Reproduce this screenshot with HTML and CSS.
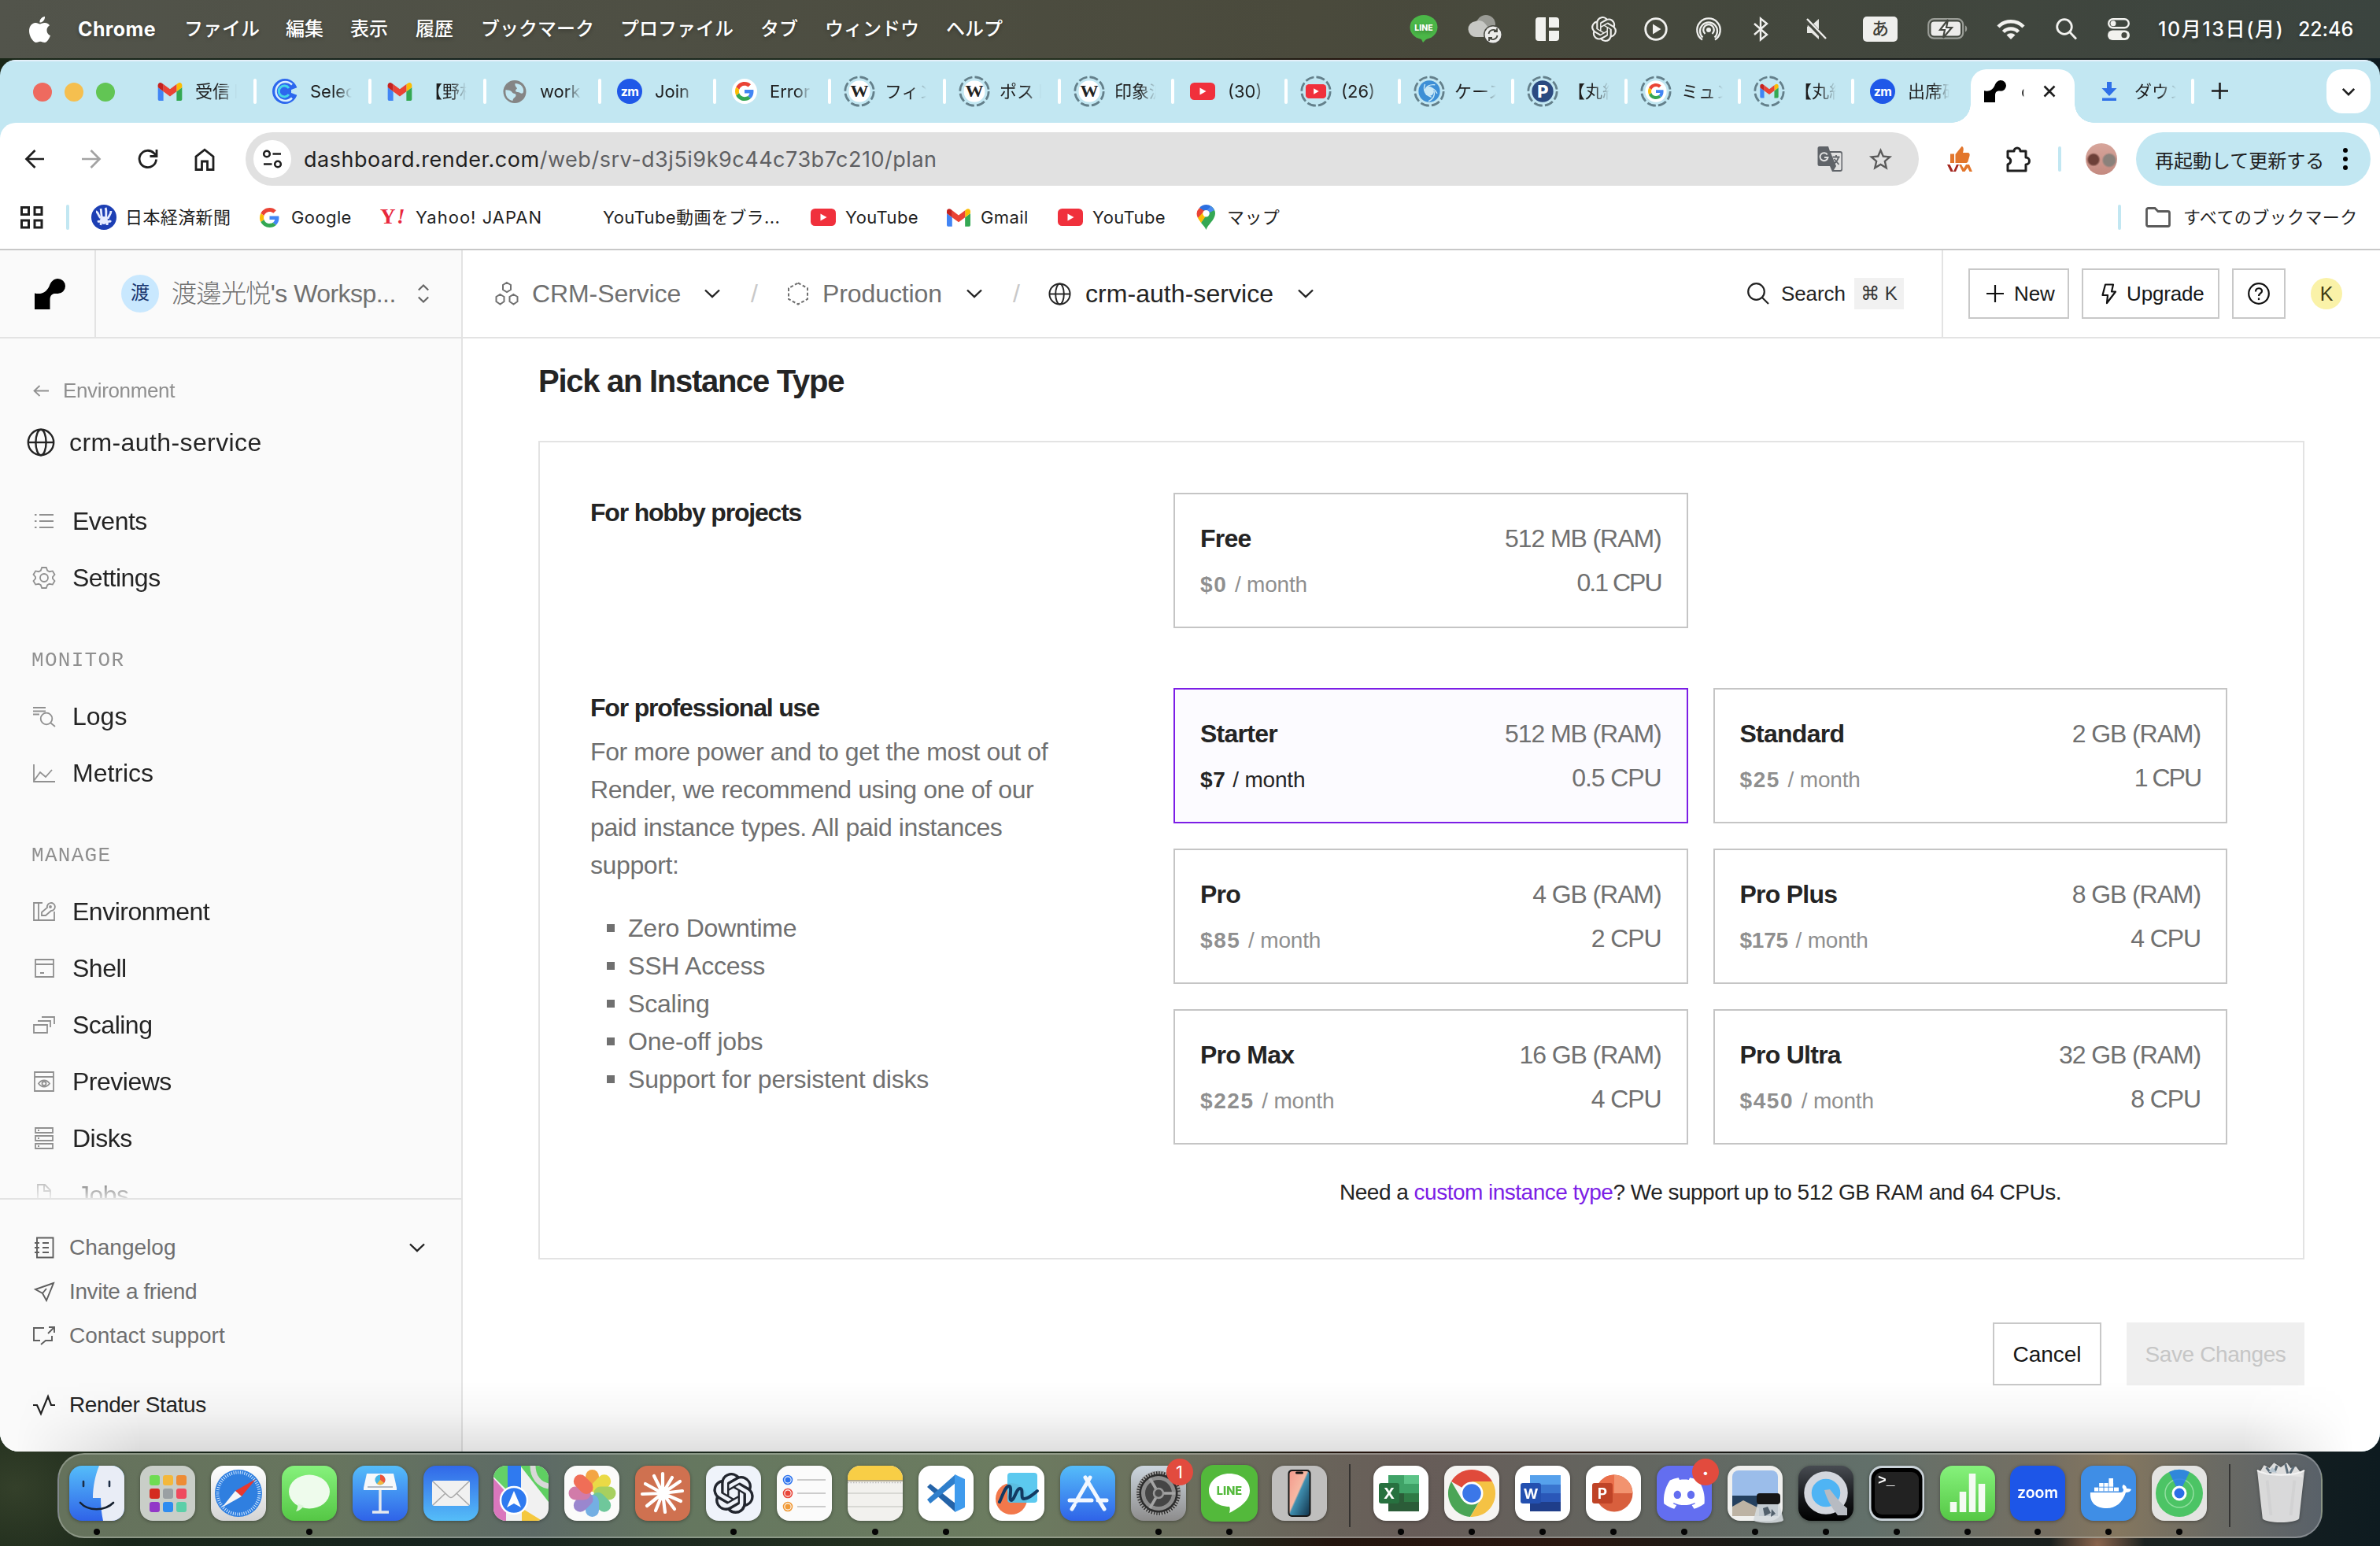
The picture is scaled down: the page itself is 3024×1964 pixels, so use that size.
FILE: index.html
```html
<!DOCTYPE html>
<html lang="ja">
<head>
<meta charset="utf-8">
<title>crm-auth-service</title>
<link rel="stylesheet" href="styles.css">
</head>
<body>
<svg class="sprite" width="0" height="0" aria-hidden="true">
  <symbol id="gmail" viewBox="52 42 88 66"><path fill="#4285f4" d="M58 108h14V74L52 59v43c0 3.32 2.69 6 6 6"/><path fill="#34a853" d="M120 108h14c3.32 0 6-2.69 6-6V59l-20 15"/><path fill="#fbbc04" d="M120 48v26l20-15v-8c0-7.42-8.47-11.65-14.4-7.2"/><path fill="#ea4335" d="M72 74V48l24 18 24-18v26L96 92"/><path fill="#c5221f" d="M52 51v8l20 15V48l-5.6-4.2c-5.94-4.45-14.4-.22-14.4 7.2"/></symbol>
  <symbol id="google" viewBox="0 0 48 48"><path fill="#EA4335" d="M24 9.5c3.54 0 6.71 1.22 9.21 3.6l6.85-6.85C35.9 2.38 30.47 0 24 0 14.62 0 6.51 5.38 2.56 13.22l7.98 6.19C12.43 13.72 17.74 9.5 24 9.5z"/><path fill="#4285F4" d="M46.98 24.55c0-1.57-.15-3.09-.38-4.55H24v9.02h12.94c-.58 2.96-2.26 5.48-4.78 7.18l7.73 6c4.51-4.18 7.09-10.36 7.09-17.65z"/><path fill="#FBBC05" d="M10.53 28.59c-.48-1.45-.76-2.99-.76-4.59s.27-3.14.76-4.59l-7.98-6.19C.92 16.46 0 20.12 0 24c0 3.88.92 7.54 2.56 10.78l7.97-6.19z"/><path fill="#34A853" d="M24 48c6.48 0 11.93-2.13 15.89-5.81l-7.73-6c-2.15 1.45-4.92 2.3-8.16 2.3-6.26 0-11.57-4.22-13.47-9.91l-7.98 6.19C6.51 42.62 14.62 48 24 48z"/></symbol>
  <symbol id="youtube" viewBox="0 0 32 22"><rect width="32" height="22" rx="5.5" fill="#f0303c"/><path d="M12.5 6.5v9l8-4.5z" fill="#fff"/></symbol>
  <symbol id="wiki" viewBox="0 0 32 32"><circle cx="16" cy="16" r="16" fill="#fff"/><text x="16" y="24" font-family="Liberation Serif, serif" font-size="24" font-weight="700" text-anchor="middle" fill="#222" textLength="27" lengthAdjust="spacingAndGlyphs">W</text></symbol>
  <symbol id="zm" viewBox="0 0 32 32"><circle cx="16" cy="16" r="16" fill="#1f58e8"/><text x="16" y="21.5" font-family="Inter, sans-serif" font-size="16" font-weight="700" text-anchor="middle" fill="#fff" letter-spacing="-.6">zm</text></symbol>
  <symbol id="openai" viewBox="0 0 24 24"><path fill="currentColor" d="M22.282 9.821a5.985 5.985 0 0 0-.516-4.91 6.046 6.046 0 0 0-6.51-2.9A6.065 6.065 0 0 0 4.981 4.18a5.985 5.985 0 0 0-3.998 2.9 6.046 6.046 0 0 0 .743 7.097 5.98 5.98 0 0 0 .51 4.911 6.051 6.051 0 0 0 6.515 2.9A5.985 5.985 0 0 0 13.26 24a6.056 6.056 0 0 0 5.772-4.206 5.99 5.99 0 0 0 3.997-2.9 6.056 6.056 0 0 0-.747-7.073zM13.26 22.43a4.476 4.476 0 0 1-2.876-1.04l.141-.081 4.779-2.758a.795.795 0 0 0 .392-.681v-6.737l2.02 1.168a.071.071 0 0 1 .038.052v5.583a4.504 4.504 0 0 1-4.494 4.494zM3.6 18.304a4.47 4.47 0 0 1-.535-3.014l.142.085 4.783 2.759a.771.771 0 0 0 .78 0l5.843-3.369v2.332a.08.08 0 0 1-.033.062L9.74 19.95a4.5 4.5 0 0 1-6.14-1.646zM2.34 7.896a4.485 4.485 0 0 1 2.366-1.973V11.6a.766.766 0 0 0 .388.676l5.815 3.355-2.02 1.168a.076.076 0 0 1-.071 0l-4.83-2.786A4.504 4.504 0 0 1 2.34 7.872zm16.597 3.855l-5.833-3.387L15.119 7.2a.076.076 0 0 1 .071 0l4.83 2.791a4.494 4.494 0 0 1-.676 8.105v-5.678a.79.79 0 0 0-.407-.667zm2.01-3.023l-.141-.085-4.774-2.782a.776.776 0 0 0-.785 0L9.409 9.23V6.897a.066.066 0 0 1 .028-.061l4.83-2.787a4.5 4.5 0 0 1 6.68 4.66zm-12.64 4.135l-2.02-1.164a.08.08 0 0 1-.038-.057V6.075a4.5 4.5 0 0 1 7.375-3.453l-.142.08L8.704 5.46a.795.795 0 0 0-.393.681zm1.097-2.365l2.602-1.5 2.607 1.5v2.999l-2.597 1.5-2.607-1.5z"/></symbol>
  <symbol id="render" viewBox="0 0 40 40"><path fill="#000" d="M0 19c9 2 15-1 19-9C21 4 25 0 30.2 0a9.8 9.8 0 0 1 0 19.6C24 19 20 20 20 28v12H0z"/></symbol>
  <symbol id="globe" viewBox="0 0 36 36"><g fill="none" stroke="currentColor" stroke-width="2.4"><circle cx="18" cy="18" r="16.2"/><ellipse cx="18" cy="18" rx="6.6" ry="16.2"/><path d="M2 18h32"/></g></symbol>
  <symbol id="chev" viewBox="0 0 20 12"><path d="M1 1.5l9 8.5 9-8.5" fill="none" stroke="currentColor" stroke-width="2.4"/></symbol>
  <symbol id="ring" viewBox="0 0 44 44"><circle cx="22" cy="22" r="20" fill="none" stroke="#64808b" stroke-width="3" stroke-dasharray="12.2 3.500"/></symbol>
  <linearGradient id="gBlue" x1="0" y1="0" x2="0" y2="1"><stop offset="0" stop-color="#55bdfa"/><stop offset="1" stop-color="#2f63e8"/></linearGradient>
  <linearGradient id="gBlueUp" x1="0" y1="0" x2="0" y2="1"><stop offset="0" stop-color="#3168e8"/><stop offset="1" stop-color="#55bdf8"/></linearGradient>
  <linearGradient id="gGreen" x1="0" y1="0" x2="0" y2="1"><stop offset="0" stop-color="#86f27c"/><stop offset="1" stop-color="#55c745"/></linearGradient>
  <linearGradient id="gGrey" x1="0" y1="0" x2="0" y2="1"><stop offset="0" stop-color="#ffffff"/><stop offset="1" stop-color="#d4d4d4"/></linearGradient>
  <linearGradient id="gSteel" x1="0" y1="0" x2="0" y2="1"><stop offset="0" stop-color="#ccd6df"/><stop offset="1" stop-color="#8d8c8c"/></linearGradient>
  <linearGradient id="gInk" x1="0" y1="0" x2="0" y2="1"><stop offset="0" stop-color="#484c52"/><stop offset=".6" stop-color="#15171a"/><stop offset="1" stop-color="#000"/></linearGradient>
  <linearGradient id="gPhone" x1="0" y1="0" x2="1" y2="1"><stop offset="0" stop-color="#f49a8c"/><stop offset=".45" stop-color="#f6b9a4"/><stop offset=".5" stop-color="#3f8fb0"/><stop offset="1" stop-color="#13354d"/></linearGradient>
</svg>

<div class="desktop">
  <header class="menubar">
    <svg width="28" height="33" viewBox="2.4 0 18.5 24"><path fill="#fff" d="M12.152 6.896c-.948 0-2.415-1.078-3.96-1.04-2.04.027-3.91 1.183-4.961 3.014-2.117 3.675-.546 9.103 1.519 12.09 1.013 1.454 2.208 3.09 3.792 3.039 1.52-.065 2.09-.987 3.935-.987 1.831 0 2.35.987 3.96.948 1.637-.026 2.676-1.48 3.676-2.948 1.156-1.688 1.636-3.325 1.662-3.415-.039-.013-3.182-1.221-3.22-4.857-.026-3.04 2.48-4.494 2.597-4.559-1.429-2.09-3.623-2.324-4.39-2.376-2-.156-3.675 1.09-4.61 1.09zM15.53 3.83c.843-1.012 1.4-2.427 1.245-3.83-1.207.052-2.662.805-3.532 1.818-.78.896-1.454 2.338-1.273 3.714 1.338.104 2.715-.688 3.559-1.701"/></svg>
    <b>Chrome</b><span>ファイル</span><span>編集</span><span>表示</span><span>履歴</span><span>ブックマーク</span><span>プロファイル</span><span>タブ</span><span>ウィンドウ</span><span>ヘルプ</span>
    <svg width="36" height="36" viewBox="0 0 36 36"><ellipse cx="17" cy="15.500" rx="17.500" ry="15.500" fill="#4bb748"/><path d="M13 29l3 6 8-8z" fill="#4bb748"/><text x="17" y="19.500" font-size="10.500" font-weight="800" text-anchor="middle" fill="#fff" font-family="Inter, sans-serif">LINE</text></svg>
    <svg width="42" height="38" viewBox="0 0 42 38"><circle cx="22" cy="13" r="12" fill="#9a9b95"/><path d="M10 29a10 10 0 0 1-1-20c3-2 9-1 12 3l8 10-7 7z" fill="#c7c8c4"/><circle cx="31" cy="26" r="12" fill="#474840"/><circle cx="31" cy="26" r="10.500" fill="#ececea"/><path d="M25.500 25a6 6 0 0 1 10.500-3M36.500 27a6 6 0 0 1-10.500 3M36 18v4h-4M26 34v-4h4" fill="none" stroke="#474840" stroke-width="1.800"/></svg>
    <svg width="30" height="30" viewBox="0 0 30 30" fill="#f2f2ef"><path d="M4 0h9v30H4a4 4 0 0 1-4-4V4a4 4 0 0 1 4-4zM17 0h9a4 4 0 0 1 4 4v9H17zM17 17h13v9a4 4 0 0 1-4 4h-9z"/></svg>
    <svg width="32" height="32"><use href="#openai"/></svg>
    <svg width="30" height="30" viewBox="0 0 30 30"><circle cx="15" cy="15" r="13.300" fill="none" stroke="#f0f0ee" stroke-width="2.800"/><path d="M11 8.500v13L21.500 15z" fill="#f0f0ee"/></svg>
    <svg width="32" height="32" viewBox="0 0 32 32" fill="none" stroke="#f0f0ee" stroke-width="2.300"><circle cx="16" cy="17" r="3" fill="#f0f0ee" stroke="none"/><path d="M11.500 22a6.800 6.800 0 1 1 9 0M8.500 26.500a11 11 0 1 1 15 0M8 29.500a14.700 14.700 0 1 1 16 0"/></svg>
    <svg width="26" height="32" viewBox="0 0 26 32" fill="none" stroke="#f0f0ee" stroke-width="2.400"><path d="M5 9l16 14-8 6.500v-27L21 9 5 23"/></svg>
    <svg width="30" height="32" viewBox="0 0 30 32"><path d="M4 11h6l9-8v15zM4 13v8h6l9 8v-5L7 11z" fill="#e8e8e5"/><path d="M3 4l24 25" stroke="#474a41" stroke-width="6"/><path d="M4 3l24 25" stroke="#f0f0ee" stroke-width="2.400"/></svg>
    <span class="ime">あ</span>
    <svg width="52" height="28" viewBox="0 0 52 28"><rect x="1.200" y="1.200" width="44" height="24.500" rx="7" fill="none" stroke="#9a9d97" stroke-width="2.200"/><rect x="4.500" y="4.500" width="37.500" height="18" rx="4" fill="#ececea"/><path d="M48 9.500c3 1 3 7 0 8z" fill="#9a9d97"/><path d="M26 2L16 15h6l-2 10 11-13h-7z" fill="#fff" stroke="#454841" stroke-width="2.200"/></svg>
    <svg width="36" height="26" viewBox="0 0 36 26"><g fill="none" stroke="#f2f2ef" stroke-width="4.600"><path d="M2 10a22.500 22.500 0 0 1 32 0M8.500 16.500a13.400 13.400 0 0 1 19 0"/></g><path d="M18 26l-5.500-5.500a8 8 0 0 1 11 0z" fill="#f2f2ef"/></svg>
    <svg width="28" height="28" viewBox="0 0 28 28" fill="none" stroke="#f2f2ef" stroke-width="2.800"><circle cx="11" cy="11" r="9.300"/><path d="M18 18l8 8.500"/></svg>
    <svg width="28" height="28" viewBox="0 0 28 28"><rect x="1.200" y="1.200" width="25.600" height="11" rx="5.500" fill="none" stroke="#f2f2ef" stroke-width="2.400"/><circle cx="7" cy="6.700" r="3.500" fill="#f2f2ef"/><rect y="15.500" width="28" height="12.500" rx="6.200" fill="#f2f2ef"/><circle cx="21" cy="21.700" r="3.600" fill="#454841"/></svg>
    <span class="date">10月13日(月)</span><span class="clock">22:46</span>
  </header>

  <div class="window">
    <div class="tabstrip">
      <div class="lights"><i class="red"></i><i class="yellow"></i><i class="green"></i></div>
      <div class="tab"><svg width="30" height="23"><use href="#gmail"/></svg><span>受信ト</span></div>
      <div class="tab"><svg width="32" height="32" viewBox="0 0 32 32"><circle cx="16" cy="16" r="16" fill="#2c67ee"/><path d="M25 7.500a12 12 0 1 0 0 17" fill="none" stroke="#d9efff" stroke-width="2.500"/><path d="M21 12a7 7 0 1 0 0 8" fill="none" stroke="#45d6e8" stroke-width="3"/><path d="M32 11l-8 3v4l8 3z" fill="#c2e7f2"/></svg><span>Selec</span></div>
      <div class="tab"><svg width="30" height="23"><use href="#gmail"/></svg><span>【野村</span></div>
      <div class="tab"><svg width="29" height="29" viewBox="0 0 29 29"><circle cx="14.500" cy="14.500" r="14.500" fill="#858585"/><path d="M3 12c3 1 6 0 8 3s5 1 5 4-4 3-4 7c-6-1-10-6-9-14zM15 4c3 0 7 1 9 4s2 6 1 8c-2 2-4-1-7-1s-3-3-1-4-3-3-2-7z" fill="#c2e7f2"/></svg><span>work</span></div>
      <div class="tab"><svg width="32" height="32"><use href="#zm"/></svg><span>Join</span></div>
      <div class="tab"><svg width="32" height="32" viewBox="0 0 32 32"><circle cx="16" cy="16" r="16" fill="#fff"/><use href="#google" x="4" y="4" width="24" height="24"/></svg><span>Error</span></div>
      <div class="tab dashed"><svg width="40" height="40" viewBox="0 0 44 44"><use href="#ring"/><use href="#wiki" x="7" y="7" width="30" height="30"/></svg><span>フィン</span></div>
      <div class="tab dashed"><svg width="40" height="40" viewBox="0 0 44 44"><use href="#ring"/><use href="#wiki" x="7" y="7" width="30" height="30"/></svg><span>ポスト</span></div>
      <div class="tab dashed narrow"><svg width="40" height="40" viewBox="0 0 44 44"><use href="#ring"/><use href="#wiki" x="7" y="7" width="30" height="30"/></svg><span>印象派</span></div>
      <div class="tab narrow"><svg width="32" height="22"><use href="#youtube"/></svg><span>(30)</span></div>
      <div class="tab dashed narrow"><svg width="40" height="40" viewBox="0 0 44 44"><use href="#ring"/><use href="#youtube" x="7.500" y="12" width="29" height="20"/></svg><span>(26)</span></div>
      <div class="tab dashed narrow"><svg width="40" height="40" viewBox="0 0 44 44"><use href="#ring"/><circle cx="22" cy="22" r="15" fill="#3d8fd6"/><circle cx="22" cy="22" r="6.500" fill="#c8e8f6"/><path d="M16 12c-3 8 0 15 9 18M30 13c-7-1-13 2-14 9M33 25c-3-6-7-8-12-9M21 36c6-3 9-8 8-14" fill="none" stroke="#c8e8f6" stroke-width="1.600"/></svg><span>ケース</span></div>
      <div class="tab dashed narrow"><svg width="40" height="40" viewBox="0 0 44 44"><use href="#ring"/><circle cx="22" cy="22" r="15" fill="#2b4a80"/><text x="22.500" y="30.500" font-size="24" font-weight="800" text-anchor="middle" fill="#fff" font-family="Inter, sans-serif">P</text></svg><span>【丸紅</span></div>
      <div class="tab dashed narrow"><svg width="40" height="40" viewBox="0 0 44 44"><use href="#ring"/><circle cx="22" cy="22" r="15" fill="#fff"/><use href="#google" x="11" y="11" width="22" height="22"/></svg><span>ミュン</span></div>
      <div class="tab dashed narrow"><svg width="40" height="40" viewBox="0 0 44 44"><use href="#ring"/><use href="#gmail" x="9" y="11" width="26" height="21"/></svg><span>【丸紅</span></div>
      <div class="tab narrow last"><svg width="32" height="32"><use href="#zm"/></svg><span>出席確</span></div>
      <div class="tab active"><svg width="28" height="28"><use href="#render"/></svg><span>c</span><svg class="close" width="16" height="16" viewBox="0 0 16 16"><path d="M1.500 1.500l13 13M14.500 1.500l-13 13" stroke="#1f1f1f" stroke-width="2.600"/></svg></div>
      <div class="tab download"><svg width="20" height="24" viewBox="0 0 20 24"><path d="M7 0h6v8h6.500L10 18 .5 8H7zM1 20.500h18V24H1z" fill="#2f70e8"/></svg><span>ダウン</span></div>
      <svg class="plus" width="21" height="21" viewBox="0 0 21 21"><path d="M10.500 0v21M0 10.500h21" stroke="#1f1f1f" stroke-width="2.600"/></svg>
      <div class="tabsearch"><svg width="18" height="11" viewBox="0 0 20 12"><path d="M2 2l8 8 8-8" fill="none" stroke="#1f1f1f" stroke-width="3"/></svg></div>
    </div>

    <div class="chrome">
      <div class="toolbar">
        <svg width="26" height="26" viewBox="0 0 26 26" fill="none" stroke="#1f1f1f" stroke-width="2.700"><path d="M25 13H3M13.500 2L2.500 13l11 11"/></svg>
        <svg width="26" height="26" viewBox="0 0 26 26" fill="none" stroke="#a3a3a3" stroke-width="2.700"><path d="M1 13h22M12.500 2l11 11-11 11"/></svg>
        <svg width="26" height="26" viewBox="0 0 26 26" fill="none" stroke="#1f1f1f" stroke-width="2.800"><path d="M23.500 13.500a10.700 10.700 0 1 1-3-8L23 8M24 1v8.500h-8.500"/></svg>
        <svg width="26" height="29" viewBox="0 0 26 29" fill="none" stroke="#1f1f1f" stroke-width="2.800"><path d="M2 27.500V11L13 2.200 24 11v16.500h-7.500V17h-7v10.500z"/></svg>
        <div class="omnibox">
          <span class="site"><svg width="26" height="24" viewBox="0 0 26 24" fill="none" stroke="#1f1f1f" stroke-width="2.600"><circle cx="6" cy="5.500" r="3.800"/><path d="M13.500 5.500H24M2 18.500h10.500"/><circle cx="20" cy="18.500" r="3.800"/></svg></span>
          <span class="url">dashboard.render.com<em>/web/srv-d3j5i9k9c44c73b7c210/plan</em></span>
          <svg class="translate" width="33" height="34" viewBox="0 0 33 34"><path d="M3 1h11l2 6h13a3 3 0 0 1 3 3v20a3 3 0 0 1-3 3H19l-3-7H3a2.500 2.500 0 0 1-2.500-2.500v-20A2.500 2.500 0 0 1 3 1z" fill="#5f6368"/><path d="M17 9h12a1.500 1.500 0 0 1 1.500 1.500v19A1.500 1.500 0 0 1 29 31h-8l3-5z" fill="#e1e1e1"/><path d="M19.500 14.500h9M24 12v2.500M27 14.500c-1 5-4 7-6 8.500M21.500 17l6 7" stroke="#5f6368" stroke-width="1.800" fill="none"/><path d="M12.800 11.500A5 5 0 1 0 13.500 15H9" stroke="#e1e1e1" stroke-width="2" fill="none"/></svg>
          <svg width="35" height="35" viewBox="0 0 24 24"><path fill="#5a5a5a" d="M22 9.240l-7.190-.62L12 2 9.190 8.630 2 9.240l5.460 4.730L5.820 21 12 17.270 18.180 21l-1.630-7.030L22 9.240zM12 15.400l-3.760 2.270 1-4.280-3.320-2.880 4.380-.38L12 6.100l1.710 4.040 4.380.38-3.320 2.880 1 4.280L12 15.400z"/></svg>
        </div>
        <svg width="32" height="32" viewBox="0 0 32 32"><path d="M4 9.500h5V21H4zM10.500 10l8-10c3 .5 2.500 5 1.500 8h6c2.500 0 3 2 2.500 4L26.500 19c-.5 1.500-1.500 2-3 2h-13z" fill="#e2762c"/><path d="M0 23h3.500l4.500 9H4.500zM8 32l4-9h3l-4 9z" fill="#a3261f"/><path d="M15 23h3l3 5 3-5h4l4 9h-3.500L26 27l-3.500 5h-3z" fill="#e2762c"/></svg>
        <svg width="35" height="33" viewBox="0 0 35 33"><path d="M13 6a4 4 0 0 1 8 0h7v8a4.500 4.500 0 0 1 0 9v8H5v-8c5-2 5-7 0-9V6z" fill="none" stroke="#1f1f1f" stroke-width="3" stroke-linejoin="round"/></svg>
        <i class="sep"></i>
        <span class="profile"></span>
        <div class="update"><span>再起動して更新する</span><svg width="6" height="28" viewBox="0 0 6 28"><circle cx="3" cy="3" r="3"/><circle cx="3" cy="14" r="3"/><circle cx="3" cy="25" r="3"/></svg></div>
      </div>
      <div class="bookmarks">
        <svg width="29" height="29" viewBox="0 0 29 29" fill="none" stroke="#1f1f1f" stroke-width="3"><path d="M1.500 1.500h9v9h-9zM18 1.500h9v9h-9zM1.500 18h9v9h-9zM18 18h9v9h-9z"/></svg>
        <i class="sep"></i>
        <svg width="32" height="32" viewBox="0 0 32 32"><circle cx="16" cy="16" r="16" fill="#1d3fb4"/><path d="M6 9c3 0 3 6 6 8M12 5c1 4 0 8 2 12M18 4c2 4 0 9 1 13M25 8c0 5-3 6-4 10M8 22c3-2 5 0 4 4M20 26c0-5 3-6 5-4" stroke="#e6ecff" stroke-width="2.800" fill="none"/><circle cx="16" cy="20" r="5" fill="#e6ecff"/></svg>
        <span class="kanji">日本経済新聞</span>
        <svg width="25" height="25"><use href="#google"/></svg><span>Google</span>
        <svg width="34" height="22" viewBox="0 0 34 22"><text x="-1" y="19" font-family="Liberation Serif, serif" font-weight="700" font-size="27" fill="#e8283c">Y</text><text x="20" y="19" font-family="Liberation Serif, serif" font-weight="700" font-style="italic" font-size="27" fill="#e8283c">!</text></svg><span class="wide">Yahoo! JAPAN</span>
        <span>YouTube動画をブラ...</span>
        <svg width="32" height="22"><use href="#youtube"/></svg><span>YouTube</span>
        <svg width="30" height="23"><use href="#gmail"/></svg><span>Gmail</span>
        <svg width="32" height="22"><use href="#youtube"/></svg><span>YouTube</span>
        <svg width="23" height="32" viewBox="0 0 23 32"><path d="M11.500 0A11.500 11.500 0 0 0 3 4l8 7 7-9a11 11 0 0 0-6.500-2z" fill="#2c6fe0"/><path d="M3 4a11.300 11.300 0 0 0-2 13L11 9z" fill="#ea4335"/><path d="M18 2L5 23c3 4 5 5 6.500 9 2-7 11-12 11.500-20.500A11.500 11.500 0 0 0 18 2z" fill="#34a853"/><path d="M18 2a11 11 0 0 1 4 5l-8 4-3-3z" fill="#4a8cf0"/><path d="M1 17l9-10 3 5-8 11c-2-3-3-4-4-6z" fill="#fbbc04"/><circle cx="11.500" cy="11.300" r="4.200" fill="#fff"/></svg><span class="kanji">マップ</span>
        <i class="sep"></i>
        <svg width="32" height="26" viewBox="0 0 32 26" fill="none" stroke="#5a5a5a" stroke-width="2.800"><path d="M1.500 3.500a2 2 0 0 1 2-2H12l4 4h12.500a2 2 0 0 1 2 2v15a2 2 0 0 1-2 2h-25a2 2 0 0 1-2-2z"/></svg>
        <span>すべてのブックマーク</span>
      </div>
    </div>

    <div class="page">
      <aside class="sidebar">
        <div class="brand">
          <div class="logo"><svg width="39" height="39"><use href="#render"/></svg></div>
          <div class="workspace"><span class="ws-avatar">渡</span><span class="ws-name">渡邊光悦's Worksp...</span><svg width="14" height="24" viewBox="0 0 14 24" fill="none" stroke="#666" stroke-width="2.200"><path d="M.8 7.500L7 1.500l6.200 6M.8 16.500l6.200 6 6.200-6"/></svg></div>
        </div>
        <nav class="nav">
          <a class="back"><svg width="20" height="15" viewBox="0 0 20 15" fill="none" stroke="#909090" stroke-width="1.800"><path d="M20 7.500H1.500M8.500 1L1.500 7.500l7 6.500"/></svg>Environment</a>
          <a class="service"><svg width="36" height="36"><use href="#globe"/></svg>crm-auth-service</a>
          <a class="item"><svg viewBox="0 0 28 28"><path d="M8 6h18M8 14h18M8 22h18M2 6h2.500M2 14h2.500M2 22h2.500"/></svg>Events</a>
          <a class="item"><svg viewBox="0 0 28 28"><circle cx="14" cy="14" r="5"/><path d="M11.200 1h5.600l1.400 3.800 2.600 1.400 4-.8L27.500 10l-2.600 3v2l2.600 3-2.700 4.600-4-.8-2.600 1.400-1.400 3.800h-5.600l-1.400-3.800-2.600-1.400-4 .8L.5 18l2.600-3v-2L.5 10l2.700-4.600 4 .8 2.600-1.400z"/></svg>Settings</a>
          <h4>MONITOR</h4>
          <a class="item loose"><svg viewBox="0 0 28 28"><path d="M0 3h16M0 7.500h16M0 11.500h8M22.500 22.500L28 27"/><circle cx="17" cy="17" r="7.300"/></svg>Logs</a>
          <a class="item loose"><svg viewBox="0 0 28 28"><path d="M1 3v22h27M1 24l8-11 7 6 8-9"/></svg>Metrics</a>
          <h4>MANAGE</h4>
          <a class="item"><svg viewBox="0 0 28 28"><path d="M12 3H1v22h26V14M7 3v22M11 19v-4l7-6a5 5 0 1 1 5 4l-7 6z"/><circle cx="22" cy="8" r="1"/></svg>Environment</a>
          <a class="item"><svg viewBox="0 0 28 28"><path d="M3 3h23v22H3zM3 9h23M9 20h5"/></svg>Shell</a>
          <a class="item"><svg viewBox="0 0 28 28"><path d="M1 14h17v10H1zM6 9h16v8M11 4h16v9"/></svg>Scaling</a>
          <a class="item"><svg viewBox="0 0 28 28"><path d="M2 2h24v24H2zM2 8h24M7 16.500c4-5.500 10-5.500 14 0-4 5.500-10 5.500-14 0z"/><circle cx="14" cy="16.500" r="2.500"/></svg>Previews</a>
          <a class="item"><svg viewBox="0 0 28 28"><path d="M3 1h22v6H3zM3 11h22v6H3zM3 21h22v6H3zM6 4h2M6 14h2M6 24h2"/></svg>Disks</a>
          <a class="item"><svg viewBox="0 0 28 28"><path d="M6 1h9l7 7v18H6zM14 1v8h8"/></svg><span class="jobs">Jobs</span></a>
        </nav>
        <footer class="links">
          <a><svg viewBox="0 0 28 28"><path d="M5 1.500h20.500v25H5zM2 8h6M2 14h6M2 20h6M12 8h8M12 14h8M12 20h8"/></svg>Changelog<svg class="more" viewBox="0 0 20 12"><use href="#chev"/></svg></a>
          <a class="invite"><svg viewBox="0 0 28 28"><path d="M26 3L3 11l9 5 5 9zM17 10l-5 6"/></svg>Invite a friend</a>
          <a><svg viewBox="0 0 28 28"><path d="M14 4H1v16h8v0M24 14v6h-8l-6 5M19 11l8-8M20 3h7v7"/></svg>Contact support</a>
          <a class="status"><svg viewBox="0 0 28 28"><path d="M0 14h5l5 11 9-22 4 11h5"/></svg>Render Status</a>
        </footer>
      </aside>

      <main class="content">
        <div class="topbar">
          <svg width="30" height="30" viewBox="0 0 30 30" fill="none" stroke="#707070" stroke-width="2"><path d="M15 1l5 3v6l-5 3-5-3V4zM6.500 16l5 3v6l-5 3.500-5-3.500v-6zM23.500 16l5 3v6l-5 3.500-5-3.500v-6z"/></svg>
          <span>CRM-Service</span><svg class="dark" width="20" height="12"><use href="#chev"/></svg><i class="slash">/</i>
          <svg width="28" height="30" viewBox="0 0 28 30" fill="none" stroke="#707070" stroke-width="2" stroke-dasharray="4 2.500"><path d="M14 1.500L26 8v14l-12 6.500L2 22V8z"/></svg>
          <span>Production</span><svg class="dark" width="20" height="12"><use href="#chev"/></svg><i class="slash">/</i>
          <svg class="dark" width="29" height="29"><use href="#globe"/></svg>
          <span class="dark">crm-auth-service</span><svg class="dark" width="20" height="12"><use href="#chev"/></svg>
          <svg width="28" height="28" viewBox="0 0 28 28" fill="none" stroke="#222" stroke-width="2.200"><circle cx="11.500" cy="11.500" r="10.300"/><path d="M19 19l8 8"/></svg>
          <span class="search">Search</span><kbd>⌘ K</kbd>
          <i class="rule"></i>
          <div class="actions">
            <button><svg width="22" height="22" viewBox="0 0 22 22"><path d="M11 0v22M0 11h22" stroke="#111" stroke-width="2.200"/></svg>New</button>
            <button><svg width="19" height="27" viewBox="0 0 19 27"><path d="M5 1.500h10l-2 9h5L7 25l1-10H1.500z" fill="none" stroke="#111" stroke-width="2.200" stroke-linejoin="round"/></svg>Upgrade</button>
            <button class="help"><svg width="28" height="28" viewBox="0 0 28 28" fill="none" stroke="#111" stroke-width="2.200"><circle cx="14" cy="14" r="12.800"/><path d="M10 11.500c0-5.500 8-5.500 8-.8 0 3-4 3-4 6.300"/><path d="M14 19.500v2.600"/></svg></button>
            <span class="user">K</span>
          </div>
        </div>

        <section class="plans">
          <h1>Pick an Instance Type</h1>
          <div class="panel">
            <div class="group">
              <div class="desc"><h2>For hobby projects</h2></div>
              <div class="cards">
                <div class="card"><b>Free</b><span class="spec">512 MB (RAM)</span><span class="price"><b>$0</b> / month</span><span class="spec tight">0.1 CPU</span></div>
              </div>
            </div>
            <div class="group">
              <div class="desc">
                <h2>For professional use</h2>
                <p>For more power and to get the most out of<br>Render, we recommend using one of our<br>paid instance types. All paid instances<br>support:</p>
                <ul><li>Zero Downtime</li><li>SSH Access</li><li>Scaling</li><li>One-off jobs</li><li>Support for persistent disks</li></ul>
              </div>
              <div class="cards">
                <div class="card selected"><b>Starter</b><span class="spec">512 MB (RAM)</span><span class="price"><b>$7</b> / month</span><span class="spec">0.5 CPU</span></div>
                <div class="card"><b>Standard</b><span class="spec">2 GB (RAM)</span><span class="price"><b>$25</b> / month</span><span class="spec tight">1 CPU</span></div>
                <div class="card"><b>Pro</b><span class="spec">4 GB (RAM)</span><span class="price"><b>$85</b> / month</span><span class="spec">2 CPU</span></div>
                <div class="card"><b>Pro Plus</b><span class="spec">8 GB (RAM)</span><span class="price"><b class="slim">$175</b> / month</span><span class="spec">4 CPU</span></div>
                <div class="card"><b>Pro Max</b><span class="spec">16 GB (RAM)</span><span class="price"><b>$225</b> / month</span><span class="spec">4 CPU</span></div>
                <div class="card"><b>Pro Ultra</b><span class="spec">32 GB (RAM)</span><span class="price"><b>$450</b> / month</span><span class="spec">8 CPU</span></div>
                <p class="custom">Need a <a>custom instance type</a>? We support up to 512 GB RAM and 64 CPUs.</p>
              </div>
            </div>
          </div>
          <div class="buttons"><button class="cancel">Cancel</button><button class="save">Save Changes</button></div>
        </section>
      </main>
    </div>
    <div class="dock-shade"></div>
  </div>

  <footer class="dock">
    <div class="app on"><svg viewBox="0 0 70 70"><rect width="70" height="70" rx="16" fill="url(#gBlue)"/><path d="M38 0c-5 12-8 27-8 41h10c0 10 1 20 3 29h11a16 16 0 0 0 16-16V16A16 16 0 0 0 54 0z" fill="#e9edf6"/><path d="M18 20v6M51 20v6" stroke="#1c2d45" stroke-width="2.600" stroke-linecap="round"/><path d="M14 47c10 11 31 11 42 0" fill="none" stroke="#15202e" stroke-width="2.600" stroke-linecap="round"/></svg></div>
    <div class="app"><svg viewBox="0 0 70 70"><rect width="70" height="70" rx="16" fill="#c9cec8"/><g><rect x="12" y="12" width="13" height="13" rx="3" fill="#6fdc52"/><rect x="29" y="12" width="13" height="13" rx="3" fill="#f3b83c"/><rect x="46" y="12" width="13" height="13" rx="3" fill="#ee8c35"/><rect x="12" y="29" width="13" height="13" rx="3" fill="#d42a20"/><rect x="29" y="29" width="13" height="13" rx="3" fill="#9aa0a3"/><rect x="46" y="29" width="13" height="13" rx="3" fill="#ef4a5e"/><rect x="12" y="46" width="13" height="13" rx="3" fill="#9238c8"/><rect x="29" y="46" width="13" height="13" rx="3" fill="#2f8cf0"/><rect x="46" y="46" width="13" height="13" rx="3" fill="#5bcfa8"/></g></svg></div>
    <div class="app"><svg viewBox="0 0 70 70"><rect width="70" height="70" rx="16" fill="url(#gGrey)"/><circle cx="35" cy="35" r="30" fill="#2f7fe0"/><circle cx="35" cy="35" r="26.500" fill="none" stroke="#d6ebff" stroke-width="4" stroke-dasharray="1 1.800"/><path d="M57 17L31 32l8 7z" fill="#e8382f"/><path d="M14 53l17-21 8 7z" fill="#f5f5f5"/></svg></div>
    <div class="app on"><svg viewBox="0 0 70 70"><rect width="70" height="70" rx="16" fill="url(#gGreen)"/><ellipse cx="35" cy="33" rx="26" ry="21.500" fill="#eefbec"/><path d="M20 48c1 5-1 8-2 10 5-1 8-4 10-7z" fill="#dff5dc"/></svg></div>
    <div class="app"><svg viewBox="0 0 70 70"><rect width="70" height="70" rx="16" fill="url(#gBlue)"/><path d="M18 10h34l4 18v3H14v-3z" fill="#f6f8fa"/><path d="M19 27h32" stroke="#9aa6b2" stroke-width="1.500"/><circle cx="35" cy="18" r="6.500" fill="#45b5e5"/><path d="M35 18V11.500a6.500 6.500 0 0 1 5 10.500z" fill="#f0533a"/><path d="M35 18l5 4a6.500 6.500 0 0 1-9 1z" fill="#f6b73c"/><path d="M35 31v27M25 59h21" stroke="#e4e9ee" stroke-width="3.400"/></svg></div>
    <div class="app"><svg viewBox="0 0 70 70"><rect width="70" height="70" rx="16" fill="url(#gBlueUp)"/><rect x="11" y="19" width="48" height="32" rx="3" fill="#f1f1f1"/><path d="M12 20l20 19c2 2 4 2 6 0l20-19M12 50l16-15M58 50L42 35" fill="none" stroke="#a9a9a9" stroke-width="1.600"/></svg></div>
    <div class="app"><svg viewBox="0 0 70 70"><clipPath id="mapClip"><rect width="70" height="70" rx="16"/></clipPath><g clip-path="url(#mapClip)"><rect width="70" height="70" fill="#f1f1f1"/><path d="M34 0h36v46z" fill="#5fcf62"/><path d="M0 16l18 20v34H0z" fill="#da77bd"/><path d="M0 0h18v32L0 14z" fill="#63d167"/><path d="M16 70V40h22v30z" fill="#f1f1f1"/><path d="M36 70V54l26 16z" fill="#f5c83f"/><path d="M18 0h17v50H18z" fill="#2f7af0"/><path d="M50 0c0 14 8 24 20 26" fill="none" stroke="#d8d8d8" stroke-width="7"/></g><circle cx="26" cy="44" r="17" fill="#2f7af0" stroke="#fff" stroke-width="2.500"/><path d="M26 32l9 21-9-5-9 5z" fill="#fff"/></svg></div>
    <div class="app"><svg viewBox="0 0 70 70"><rect width="70" height="70" rx="16" fill="#fbfbfa"/><g opacity=".88"><rect x="27" y="5" width="17" height="28" rx="8.500" fill="#f39a2b"/><rect x="27" y="5" width="17" height="28" rx="8.500" fill="#e8d62e" transform="rotate(45 35.500 35)"/><rect x="27" y="5" width="17" height="28" rx="8.500" fill="#9ccb4a" transform="rotate(90 35.500 35)"/><rect x="27" y="5" width="17" height="28" rx="8.500" fill="#5cc08e" transform="rotate(135 35.500 35)"/><rect x="27" y="5" width="17" height="28" rx="8.500" fill="#62a5e0" transform="rotate(180 35.500 35)"/><rect x="27" y="5" width="17" height="28" rx="8.500" fill="#8d78c8" transform="rotate(225 35.500 35)"/><rect x="27" y="5" width="17" height="28" rx="8.500" fill="#cc6a9e" transform="rotate(270 35.500 35)"/><rect x="27" y="5" width="17" height="28" rx="8.500" fill="#ef5b41" transform="rotate(315 35.500 35)"/></g></svg></div>
    <div class="app"><svg viewBox="0 0 70 70"><rect width="70" height="70" rx="16" fill="#cf7150"/><path d="M35 35V10M35 35l12-20M35 35l22-15M35 35l25-3M35 35l23 10M35 35l15 20M35 35l3 24M35 35L26 57M35 35L15 51M35 35L9 36M35 35L13 23M35 35L24 13" stroke="#fff" stroke-width="4.200" stroke-linecap="round"/></svg></div>
    <div class="app on ai"><svg viewBox="0 0 70 70"><rect width="70" height="70" rx="16" fill="#eff3fa"/><use href="#openai" x="9" y="9" width="52" height="52"/></svg></div>
    <div class="app"><svg viewBox="0 0 70 70"><rect width="70" height="70" rx="16" fill="#fbfbfb"/><g fill="#fff" stroke-width="1.600"><circle cx="14" cy="18" r="5.500" stroke="#2e74ee"/><circle cx="14" cy="35" r="5.500" stroke="#e9463a"/><circle cx="14" cy="52" r="5.500" stroke="#f09a38"/></g><circle cx="14" cy="18" r="3.600" fill="#2e74ee"/><circle cx="14" cy="35" r="3.600" fill="#e9463a"/><circle cx="14" cy="52" r="3.600" fill="#f09a38"/><path d="M26 18h36M26 35h36M26 52h36" stroke="#bdbdbd" stroke-width="1.600"/></svg></div>
    <div class="app on"><svg viewBox="0 0 70 70"><rect width="70" height="70" rx="16" fill="#f2f1ee"/><path d="M0 18v-2A16 16 0 0 1 16 0h38a16 16 0 0 1 16 16v2z" fill="#f8ce46"/><path d="M0 19h70" stroke="#9c8f69" stroke-width="1.500"/><path d="M0 21.500h70" stroke="#bbb" stroke-width="1.500" stroke-dasharray="1.500 2"/><path d="M0 35h70M0 52h70" stroke="#d0cfcc" stroke-width="1.600"/></svg></div>
    <div class="app on"><svg viewBox="0 0 70 70"><rect width="70" height="70" rx="16" fill="#fff"/><path d="M11 27l4-4 32 25v11z" fill="#2463a8"/><path d="M11 43l4 5 32-26V11z" fill="#2f7fcc"/><path d="M46 11l13 6v36l-13 6z" fill="#3f9bed"/></svg></div>
    <div class="app"><svg viewBox="0 0 70 70"><rect width="70" height="70" rx="16" fill="#fff"/><circle cx="28" cy="42" r="20" fill="#f2784b"/><rect x="23" y="9" width="38" height="38" rx="4" fill="#4ec4ee" opacity=".92"/><path d="M13 46c4-8 7-20 12-20s-1 18 3 18 6-15 11-15 0 13 5 13 10-4 17-10" fill="none" stroke="#123a62" stroke-width="4" stroke-linecap="round"/></svg></div>
    <div class="app"><svg viewBox="0 0 70 70"><rect width="70" height="70" rx="16" fill="url(#gBlue)"/><path d="M38 15L20 46M32 15l24 40M12 44h28M48 44h11M18 50l-3 5" stroke="#f2f8ff" stroke-width="5" stroke-linecap="round"/></svg></div>
    <div class="app on"><svg viewBox="0 0 70 70"><rect width="70" height="70" rx="16" fill="url(#gSteel)"/><circle cx="35" cy="35" r="28" fill="#2c2c2c"/><circle cx="35" cy="35" r="26.500" fill="none" stroke="#a2a2a2" stroke-width="4" stroke-dasharray="2 1.400"/><circle cx="35" cy="35" r="22" fill="#8d8d8d"/><circle cx="35" cy="35" r="17" fill="#454545"/><path d="M35 35h21M35 35L24 16M35 35L24 54" stroke="#a5a5a5" stroke-width="3.500"/><circle cx="35" cy="35" r="6" fill="#4a4a4a" stroke="#999" stroke-width="2.500"/></svg><span class="badge">1</span></div>
    <div class="app on"><svg viewBox="0 0 70 70"><rect x="-1" y="-1" width="72" height="72" rx="16" fill="#53b93b"/><path d="M35 10c15 0 26 9 26 21.500C61 44 49 53 35 60c1-4 1-6 0-8C20 52 9 43 9 31.500S20 10 35 10z" fill="#fff"/><text x="35" y="37" font-family="Inter, sans-serif" font-size="14.500" font-weight="800" text-anchor="middle" fill="#53b93b">LINE</text></svg></div>
    <div class="app"><svg viewBox="0 0 70 70"><rect width="70" height="70" rx="16" fill="#bfbebd"/><rect x="20.500" y="5" width="29" height="60" rx="5" fill="#181818"/><rect x="22.500" y="7" width="25" height="56" rx="3.500" fill="url(#gPhone)"/><rect x="30" y="7.500" width="10" height="3" rx="1.500" fill="#111"/></svg></div>
    <i class="divider"></i>
    <div class="app on"><svg viewBox="0 0 70 70"><rect width="70" height="70" rx="16" fill="#fff"/><path d="M19 12h20v23H19zM39 23h19v12H39z" fill="#3fa267"/><path d="M39 12h19v11H39z" fill="#5cc387"/><path d="M19 35h39v23H19z" fill="#2b5c38"/><path d="M39 35h19v11H39z" fill="#2f7a45"/><rect x="7" y="22" width="26" height="26" rx="3" fill="#27713f"/><text x="20" y="42" font-size="19" font-weight="700" text-anchor="middle" fill="#fff" font-family="Inter, sans-serif">X</text></svg></div>
    <div class="app on"><svg viewBox="0 0 70 70"><rect width="70" height="70" rx="16" fill="#f5f4f2"/><path d="M35 35L9 20a30 30 0 0 1 52 0z" fill="#e04a3b"/><path d="M35 35l-13 7L9 20a30 30 0 0 0 24 45l13-22z" fill="#4ba556"/><path d="M35 20h26a30 30 0 0 1-28 45l15-25z" fill="#f5c244"/><circle cx="35" cy="35" r="14.500" fill="#fff"/><circle cx="35" cy="35" r="11.800" fill="#3b77e8"/></svg></div>
    <div class="app on"><svg viewBox="0 0 70 70"><rect width="70" height="70" rx="16" fill="#fff"/><path d="M19 12h39v12H19z" fill="#56a1ec"/><path d="M19 24h39v11H19z" fill="#3a76cf"/><path d="M19 35h39v11H19z" fill="#2a57b8"/><path d="M19 46h39v12H19z" fill="#1f3e8a"/><rect x="7" y="22" width="26" height="26" rx="3" fill="#2350b0"/><text x="20" y="42" font-size="18" font-weight="700" text-anchor="middle" fill="#fff" font-family="Inter, sans-serif">W</text></svg></div>
    <div class="app on"><svg viewBox="0 0 70 70"><rect width="70" height="70" rx="16" fill="#fff"/><circle cx="36" cy="35" r="23.500" fill="#d85f3d"/><path d="M36 11.500A23.500 23.500 0 0 1 59.500 35H36z" fill="#f2936f"/><path d="M36 11.500A23.500 23.500 0 0 0 12.500 35H36z" fill="#ea6f4a"/><rect x="8" y="22" width="26" height="26" rx="3" fill="#bf4326"/><text x="21" y="42" font-size="19" font-weight="700" text-anchor="middle" fill="#fff" font-family="Inter, sans-serif">P</text></svg></div>
    <div class="app on"><svg viewBox="0 0 70 70"><rect width="70" height="70" rx="16" fill="#636ef0"/><g transform="translate(9 9) scale(2.160)"><path fill="#fff" d="M20.317 4.3698a19.7913 19.7913 0 00-4.8851-1.5152.0741.0741 0 00-.0785.0371c-.211.3753-.4447.8648-.6083 1.2495-1.8447-.2762-3.68-.2762-5.4868 0-.1636-.3933-.4058-.8742-.6177-1.2495a.077.077 0 00-.0785-.037 19.7363 19.7363 0 00-4.8852 1.515.0699.0699 0 00-.0321.0277C.5334 9.0458-.319 13.5799.0992 18.0578a.0824.0824 0 00.0312.0561c2.0528 1.5076 4.0413 2.4228 5.9929 3.0294a.0777.0777 0 00.0842-.0276c.4616-.6304.8731-1.2952 1.226-1.9942a.076.076 0 00-.0416-.1057c-.6528-.2476-1.2743-.5495-1.8722-.8923a.077.077 0 01-.0076-.1277c.1258-.0943.2517-.1923.3718-.2914a.0743.0743 0 01.0776-.0105c3.9278 1.7933 8.18 1.7933 12.0614 0a.0739.0739 0 01.0785.0095c.1202.099.246.1981.3728.2924a.077.077 0 01-.0066.1276 12.2986 12.2986 0 01-1.873.8914.0766.0766 0 00-.0407.1067c.3604.698.7719 1.3628 1.225 1.9932a.076.076 0 00.0842.0286c1.961-.6067 3.9495-1.5219 6.0023-3.0294a.077.077 0 00.0313-.0552c.5004-5.177-.8382-9.6739-3.5485-13.6604a.061.061 0 00-.0312-.0286zM8.02 15.3312c-1.1825 0-2.1569-1.0857-2.1569-2.419 0-1.3332.9555-2.4189 2.157-2.4189 1.2108 0 2.1757 1.0952 2.1568 2.419 0 1.3332-.9555 2.4189-2.1569 2.4189zm7.9748 0c-1.1825 0-2.1569-1.0857-2.1569-2.419 0-1.3332.9554-2.4189 2.1569-2.4189 1.2108 0 2.1757 1.0952 2.1568 2.419 0 1.3332-.946 2.4189-2.1568 2.4189Z"/></g></svg><span class="badge dot">•</span></div>
    <div class="app on"><svg viewBox="0 0 70 70"><rect width="70" height="70" rx="16" fill="#f0f0ee"/><rect x="6" y="6" width="58" height="58" rx="8" fill="#9bbdea"/><path d="M6 38h58v26H6z" fill="#24405f"/><path d="M6 52l14-8 20 10v10H6z" fill="#bdb3a4"/><rect x="37" y="35" width="30" height="14" rx="4" fill="#161616"/><path d="M38 49h28l5 20c-2 5-35 5-38 0z" fill="#d5dade" opacity=".9"/><path d="M45 54l6-2 4 8-8 4zM56 55l5 6-6 4z" fill="#52606c"/></svg></div>
    <div class="app on"><svg viewBox="0 0 70 70"><rect width="70" height="70" rx="16" fill="url(#gInk)"/><ellipse cx="35" cy="34.500" rx="23" ry="22.500" fill="#4fb4f4" stroke="#d3d6dd" stroke-width="9.500"/><path d="M33 31l7-1c6 8 14 18 22 24v9H50C43 54 36 43 33 31z" fill="#b7bbc2"/></svg></div>
    <div class="app on"><svg viewBox="0 0 70 70"><rect width="70" height="70" rx="16" fill="#c9d2d8"/><rect x="2.500" y="3" width="65" height="64" rx="14" fill="#000"/><rect x="7" y="8" width="56" height="54" rx="9" fill="#222"/><text x="11" y="24" font-size="18" font-weight="700" fill="#fff" font-family="Liberation Mono, monospace">&gt;_</text></svg></div>
    <div class="app on"><svg viewBox="0 0 70 70"><rect width="70" height="70" rx="16" fill="url(#gGreen)"/><path d="M17 46v13M29 33v26M41 10v49M53 23v36" stroke="#f4fbf3" stroke-width="8.500"/></svg></div>
    <div class="app on"><svg viewBox="0 0 70 70"><rect width="70" height="70" rx="16" fill="#1d56e8"/><text x="35" y="40.500" font-size="19.500" font-weight="600" text-anchor="middle" fill="#fff" font-family="Inter, sans-serif">zoom</text></svg></div>
    <div class="app on"><svg viewBox="0 0 70 70"><rect width="70" height="70" rx="16" fill="#3f8ee6"/><path d="M12 34h38c3 0 4-1 4-4-2-2-2-4 0-6 3 1 4 3 4 5 2 0 4 0 6 1-1 3-4 4-7 4-4 13-13 20-24 20-14 0-22-7-21-20z" fill="#fff"/><path d="M17 27h31v5.500H17zM23 22h19v5H23zM35 16h6v6h-6z" fill="#fff"/><path d="M22.700 22v10.500M29 22v10.500M35 16v16.500M41.500 22v10.500M17 27.200h31" stroke="#3f8ee6" stroke-width=".9"/></svg></div>
    <div class="app on"><svg viewBox="0 0 70 70"><rect width="70" height="70" rx="16" fill="#e4e4e2"/><circle cx="35" cy="35" r="30" fill="#4cc465"/><circle cx="35" cy="35" r="18" fill="none" stroke="#92dfa0" stroke-width="1.500"/><path d="M35 35L22 8a30 30 0 0 1 26 0z" fill="#2b7df0" opacity=".85"/><circle cx="35" cy="35" r="8" fill="#2b6fe6" stroke="#fff" stroke-width="3"/></svg></div>
    <i class="divider"></i>
    <div class="app trash"><svg viewBox="0 0 64 80"><path d="M4 14l6-10 7 4 6-7 9 6 8-6 5 7 7-2 6 8 4 6z" fill="#dedede"/><path d="M13 7l6 8M27 5l-3 8M38 3l3 12M49 6l-5 9" stroke="#5a6b78" stroke-width="3"/><path d="M16 13l5-6 6 7z" fill="#b5c4cf"/><path d="M1 11c12 8 50 8 62 0l-7 63c-4 7-44 7-48 0z" fill="#e2e2e2" opacity=".95"/><path d="M1 11c12 8 50 8 62 0" fill="none" stroke="#f4f4f4" stroke-width="2"/><path d="M14 24l5 46M50 24l-5 46" stroke="#cfd0d1" stroke-width="4" opacity=".7"/></svg></div>
  </footer>
</div>
</body>
</html>
```
FILE: styles.css
```css
* { box-sizing: border-box; }
body { margin: 0; width: 3024px; height: 1964px; overflow: hidden; font-family: Inter, "Noto Sans CJK JP", sans-serif; color: #1f1f1f; }
svg { display: block; flex: none; overflow: visible; }
.sprite { position: absolute; }
i, em { font-style: normal; }
span, b, a { white-space: nowrap; }

.desktop {
  width: 3024px; height: 1964px; display: flex; flex-direction: column;
  background:
    radial-gradient(ellipse 160px 130px at 20px 1890px, #34402a, transparent),
    radial-gradient(ellipse 60px 60px at 2665px 1962px, #8a654d, transparent),
    linear-gradient(90deg, #1a2718 0, #16231e 20%, #25321f 42%, #1f2a1d 50%, #23150e 56%, #2a1710 66%, #161a17 74%, #1c2220 90%, #0e1b20 100%);
}

/* macOS menu bar */
.menubar {
  height: 74px; flex: none; display: grid; align-items: center; padding-left: 36px; color: #fff; font-size: 24px; line-height: 30px;
  grid-template-columns: 63px 135px 129px 82px 83px 83px 177px 178px 82px 154px 590px 74px 85px 71px 67px 66px 69px 68px 75px 82px 88px 75px 66px 64px 178px auto;
  background: linear-gradient(90deg, #52544b, #4a4a3c 55%, #3b443f);
  text-shadow: 0 2px 5px rgba(0, 0, 0, .3);
}
.menubar span { font-weight: 500; }
.menubar b { font-size: 25px; letter-spacing: .4px; }
.menubar svg { color: #f0f0ee; }
.menubar .date, .menubar .clock { font-size: 25px; letter-spacing: 1.6px; }
.menubar .clock { letter-spacing: -.1px; }
.menubar .ime { width: 44px; height: 32px; border-radius: 5px; background: #efefed; color: #3e403a; text-align: center; font-size: 22px; text-shadow: none; }

/* Browser window */
.window { position: relative; margin-top: 2px; height: 1768px; flex: none; display: flex; flex-direction: column; overflow: hidden; border-radius: 20px 20px 24px 24px; background: #c2e7f2; }
.tabstrip { height: 80px; flex: none; display: flex; align-items: flex-end; border-top: 2px solid #e4f0fa; }
.lights { width: 178px; height: 68px; display: flex; align-items: center; gap: 16px; padding: 2px 0 12px 42px; }
.lights i { width: 24px; height: 24px; border-radius: 50%; }
.red { background: #ee6a5f; } .yellow { background: #f5bf4f; } .green { background: #62c554; }
.tab { position: relative; width: 146px; height: 68px; padding-bottom: 12px; flex: none; display: flex; align-items: center; }
.tab.narrow { width: 144px; }
.tab > svg:first-child { width: 40px; margin-left: 18px; }
.tab > span { width: 54px; margin-left: 12px; overflow: hidden; font-size: 22px; line-height: 34px; -webkit-mask-image: linear-gradient(90deg, #000 60%, transparent 98%); mask-image: linear-gradient(90deg, #000 60%, transparent 98%); }
.tab::after { content: ""; position: absolute; right: -2px; top: 12px; width: 4px; height: 32px; border-radius: 2px; background: #fff; }
.tab.last::after, .tab.active::after { display: none; }
.tab.active { width: 132px; margin-left: 6px; border-radius: 20px 20px 0 0; background: #fff; }
.tab.active::before { content: ""; position: absolute; left: -24px; right: -24px; bottom: 0; height: 24px; background: radial-gradient(circle at 0 0, transparent 23.500px, #fff 24px) left / 24px 24px no-repeat, radial-gradient(circle at 100% 0, transparent 23.500px, #fff 24px) right / 24px 24px no-repeat; }
.tab.active > svg:first-child { width: 28px; margin-left: 17px; }
.tab.active > span { width: 4px; margin-left: 19px; }
.tab.active .close { margin-left: 24px; }
.tab.download { width: 150px; }
.tab.download > svg:first-child { width: 20px; margin-left: 34px; }
.tab.download > span { margin-left: 22px; }
.plus { margin: 0 0 30px 24px; }
.tabsearch { width: 56px; height: 56px; margin: 0 12px 12px auto; border-radius: 20px; background: #fff; display: flex; align-items: center; justify-content: center; }

.chrome { height: 162px; flex: none; background: #fff; border-radius: 20px 20px 0 0; border-bottom: 2px solid #c8c8c8; }
.toolbar { height: 92px; padding-left: 31px; display: grid; align-items: center; grid-template-columns: 72px 72px 72px 65px 2162px 72px 69px 35px 64px 298px; }
.omnibox { width: 2126px; height: 68px; border-radius: 34px; background: #e1e1e1; display: flex; align-items: center; padding: 0 31px 0 10px; }
.site { width: 48px; height: 48px; border-radius: 50%; background: #fff; display: flex; align-items: center; justify-content: center; }
.url { margin-left: 16px; font-size: 27px; letter-spacing: .52px; }
.url em { color: #5f6063; }
.translate { margin: 0 30px 0 auto; }
.sep { width: 4px; height: 32px; border-radius: 2px; background: #c2e7f2; }
.profile { width: 40px; height: 40px; border-radius: 50%; background: radial-gradient(circle at 25% 52%, #6d4038 0 17%, transparent 24%), radial-gradient(circle at 75% 54%, #8a817b 0 19%, transparent 26%), linear-gradient(#d7a59b, #c48a80); }
.update { width: 298px; height: 68px; border-radius: 34px; background: #c2e7f2; display: flex; align-items: center; padding: 0 29px 0 24px; justify-content: space-between; font-size: 24px; }
.bookmarks { height: 56px; padding-left: 26px; display: grid; align-items: center; font-size: 22px; letter-spacing: .4px; grid-template-columns: 58px 32px 45px 169px 40px 114px 44px 238px 264px 44px 129px 43px 98px 44px 133px 40px 1130px 35px 48px auto; }
.bookmarks .kanji { margin-left: -2px; }
.bookmarks .wide { letter-spacing: 1px; }
.bookmarks span { line-height: 28px; }

/* Dashboard page */
.page { flex: 1; display: flex; background: #fff; font-family: "Liberation Sans", "Noto Sans CJK JP", sans-serif; color: #242424; min-height: 0; }
.sidebar { width: 588px; border-right: 2px solid #e3e3e3; background: #fafafa; display: flex; flex-direction: column; }
.brand { height: 112px; flex: none; display: flex; border-bottom: 2px solid #e3e3e3; }
.logo { width: 122px; border-right: 2px solid #e3e3e3; display: flex; align-items: center; padding-left: 44px; }
.workspace { flex: 1; display: flex; align-items: center; padding: 0 41px 0 32px; }
.ws-avatar { width: 48px; height: 48px; border-radius: 50%; background: #c9e8fe; color: #17356f; font-size: 24px; line-height: 46px; text-align: center; }
.ws-name { margin-left: 16px; font-size: 32px; line-height: 40px; color: #707070; letter-spacing: -.55px; font-weight: 300; }
.workspace svg { margin-left: auto; }
.nav { height: 1092px; flex: none; overflow: hidden; padding-top: 38px; -webkit-mask-image: linear-gradient(#000 1050px, transparent 1100px); mask-image: linear-gradient(#000 1050px, transparent 1100px); }
.nav a { display: flex; align-items: center; }
.back { height: 56px; padding-left: 42px; gap: 18px; font-size: 26px; color: #8f8f8f; letter-spacing: -.35px; }
.service { height: 72px; margin: 2px 0 28px; padding-left: 34px; gap: 18px; font-size: 32px; letter-spacing: .4px; }
.item { height: 72px; padding-left: 42px; gap: 22px; font-size: 32px; letter-spacing: -.5px; }
.item.loose { letter-spacing: 0; }
.item svg { width: 28px; height: 28px; fill: none; stroke: #909090; stroke-width: 1.8; }
.jobs { margin-left: 6px; }
.nav h4 { margin: 32px 0 0; height: 72px; padding-left: 40px; font: 400 26px/74px "Liberation Mono", monospace; letter-spacing: 1.3px; color: #8f8f8f; }
.links { flex: 1; border-top: 2px solid #e3e3e3; padding-top: 33px; }
.links a { height: 56px; display: flex; align-items: center; gap: 18px; padding: 0 46px 0 42px; font-size: 28px; color: #6f6f6f; }
.links svg { width: 28px; height: 28px; fill: none; stroke: #5f5f5f; stroke-width: 1.9; }
.links .more { width: 20px; height: 12px; margin-left: auto; color: #222; stroke: none; }
.links .invite { letter-spacing: -.4px; }
.links .status { margin-top: 32px; color: #242424; letter-spacing: -.4px; }
.links .status svg { stroke: #222; stroke-width: 2.2; }

.content { flex: 1; display: flex; flex-direction: column; }
.topbar { height: 112px; flex: none; border-bottom: 2px solid #e3e3e3; display: grid; align-items: center; padding-left: 41px; font-size: 32px; color: #707070;
  grid-template-columns: 45px 221px 59px 46px 43px 185px 59px 45px 45px 272px 571px 41px 95px 111px 34px auto; }
.topbar > span { margin-left: 2px; letter-spacing: -.1px; }
.topbar .dark { color: #242424; letter-spacing: .05px; }
.slash { color: #c9c9c9; }
.topbar .search { font-size: 26px; color: #242424; }
kbd { width: 63px; height: 40px; background: #f1f1f1; color: #333; font: 24px/40px "Liberation Sans", "DejaVu Sans", sans-serif; text-align: center; }
.rule { width: 2px; height: 110px; background: #e3e3e3; }
.actions { display: flex; align-items: center; gap: 16px; }
button { font-family: inherit; background: #fff; border: 2px solid #c8c8c8; color: #161616; }
.actions button { height: 64px; display: flex; align-items: center; gap: 13px; padding: 0; font-size: 26px; letter-spacing: -.15px; }
.actions button:nth-child(1) { width: 128px; padding-left: 21px; }
.actions button:nth-child(2) { width: 175px; padding-left: 23px; }
.actions .help { width: 68px; justify-content: center; }
.actions .user { width: 40px; height: 40px; margin-left: 16px; border-radius: 50%; background: #faf2a8; color: #3d3b12; font-size: 25px; line-height: 40px; text-align: center; }

.plans { padding: 24px 96px 0; display: flex; flex-direction: column; }
h1 { margin: 0; height: 106px; font-size: 40px; line-height: 60px; letter-spacing: -1.28px; }
.panel { height: 1040px; border: 2px solid #e3e3e3; padding: 64px 96px 0 64px; display: flex; flex-direction: column; gap: 76px; }
.group { display: flex; justify-content: space-between; }
.desc { width: 640px; font-size: 32px; line-height: 48px; color: #707070; }
h2 { margin: 0 0 7px; font-size: 32px; line-height: 50px; color: #242424; letter-spacing: -1.2px; }
.desc p { margin: 0; letter-spacing: -.4px; white-space: nowrap; }
ul { margin: 32px 0 0; padding: 0; list-style: none; letter-spacing: -.2px; }
li { display: flex; align-items: center; gap: 17px; padding-left: 21px; }
li::before { content: ""; width: 10px; height: 10px; background: #707070; }
.cards { width: 1339px; display: grid; grid-template-columns: 1fr 1fr; gap: 32px; align-content: start; }
.group:first-child .card { grid-column: 1; }
.card { height: 172px; border: 2px solid #c5c5c5; padding: 28px 32px; display: grid; grid-template-columns: 1fr auto; grid-template-rows: 56px 56px; align-items: center; font-size: 32px; }
.card > b { letter-spacing: -.75px; }
.spec { text-align: right; color: #707070; letter-spacing: -1.1px; }
.spec.tight { letter-spacing: -2px; }
.price { font-size: 28px; color: #8f8f8f; padding-top: 5px; letter-spacing: -.2px; }
.price b { letter-spacing: 1.6px; margin-right: 2px; }
.price .slim { letter-spacing: -.2px; }
.selected { border-color: #7c1ee6; background: #fcfbff; }
.selected .price { color: #242424; }
.selected .price b { letter-spacing: .8px; margin-right: 1px; }
.custom { grid-column: 1 / 3; margin: 9px 0 0; font-size: 28px; line-height: 40px; letter-spacing: -.51px; text-align: center; color: #242424; }
.custom a { color: #7c1ee6; }
.buttons { margin-top: 80px; display: flex; justify-content: flex-end; gap: 32px; }
.buttons button { height: 80px; padding: 2px 0 0; font-size: 28px; }
.buttons .cancel { width: 138px; }
.buttons .save { width: 226px; background: #efefef; border-color: #efefef; color: #c6c6c6; letter-spacing: -.4px; }
.dock-shade { position: absolute; left: 0; right: 0; bottom: 0; height: 90px; background: linear-gradient(transparent, rgba(0, 0, 0, .03) 45%, rgba(0, 0, 0, .125)); -webkit-mask-image: linear-gradient(90deg, transparent 20px, #000 180px, #000 2850px, transparent 2990px); mask-image: linear-gradient(90deg, transparent 20px, #000 180px, #000 2850px, transparent 2990px); }

/* Dock */
.dock {
  width: 2878px; height: 108px; margin: 2px 0 0 73px; padding: 14px 0 0 13px; border: 2px solid rgba(255, 255, 255, .25); border-radius: 34px; display: flex; gap: 20px;
  background: linear-gradient(90deg, #65725c 0, #67755e 12%, #5d6a66 21%, #65775f 28%, #6c7c60 42%, #6b6a5c 52%, #675c58 60%, #636660 70%, #62706a 80%, #766f62 88%, #85775f 91%, #6c6b63 95%, #596169 100%);
}
.app { position: relative; width: 70px; height: 88px; flex: none; margin-right: -.1px; }
.app svg { width: 70px; height: 70px; filter: drop-shadow(0 1px 2px rgba(0, 0, 0, .35)); }
.app.on::after { content: ""; display: block; width: 8px; height: 8px; margin: 10px auto 0; border-radius: 50%; background: #050505; }
.app.ai { color: #22262e; }
.app.trash svg { width: 62px; height: 78px; margin: -5px 0 0 4px; }
.badge { position: absolute; left: 45px; top: -9px; width: 34px; height: 34px; border-radius: 50%; background: #e24b3e; color: #fff; font-size: 22px; line-height: 34px; text-align: center; }
.badge.dot { font-size: 14px; line-height: 36px; }
.divider { width: 2px; height: 80px; flex: none; margin: -2px 9px 0 8px; background: rgba(30, 30, 30, .7); }
```
